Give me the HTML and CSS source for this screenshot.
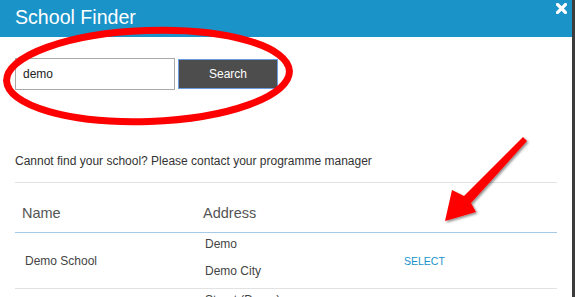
FILE: index.html
```html
<!DOCTYPE html>
<html lang="en">
<head>
    <meta charset="UTF-8">
    <meta name="viewport" content="width=device-width, initial-scale=1.0">
    <title>School Finder</title>
    <link rel="stylesheet" href="styles.css">
</head>
<body>
    <div class="modal">
        <div class="modal-header">
            <div class="modal-title">School Finder</div>
            <button class="close-btn" aria-label="Close">
                <svg width="11" height="11" viewBox="0 0 11 11">
                    <path d="M1.5 1.5 L9.5 9.5 M9.5 1.5 L1.5 9.5" stroke="#fff" stroke-width="3.2" stroke-linecap="square"/>
                </svg>
            </button>
        </div>

        <div class="modal-body">
            <div class="search-row">
                <input class="search-input" type="text" value="demo">
                <button class="btn">Search</button>
            </div>

            <p class="note">Cannot find your school? Please contact your programme manager</p>
            <hr class="divider">

            <table class="results">
                <thead>
                    <tr>
                        <th class="col-name">Name</th>
                        <th class="col-address">Address</th>
                        <th></th>
                    </tr>
                </thead>
                <tbody>
                    <tr>
                        <td class="school-name">Demo School</td>
                        <td class="address">
                            <div class="address-line">Demo</div>
                            <div class="address-line">Demo City</div>
                        </td>
                        <td class="action"><a href="#" class="select-link">SELECT</a></td>
                    </tr>
                    <tr>
                        <td class="school-name"></td>
                        <td class="address">
                            <div class="address-line">Street (Demo)</div>
                        </td>
                        <td></td>
                    </tr>
                </tbody>
            </table>
        </div>

        <!-- annotation marks drawn over the screenshot -->
        <svg class="annotations" width="572" height="297" viewBox="0 0 572 297">
            <defs>
                <filter id="shadow" x="-20%" y="-20%" width="140%" height="140%">
                    <feDropShadow dx="1.5" dy="1.5" stdDeviation="1.2" flood-color="#000" flood-opacity="0.45"/>
                </filter>
            </defs>
            <ellipse cx="148" cy="76" rx="141.5" ry="45.5" fill="none" stroke="#ff0000" stroke-width="7" transform="rotate(-2 148 76)"/>
            <polygon filter="url(#shadow)" fill="#ff0000"
                points="523,137 527,141 471,203 476,212 445,221 452,190 464,196"/>
        </svg>
    </div>
</body>
</html>
```

FILE: styles.css
```css
* {
    margin: 0;
    padding: 0;
    box-sizing: border-box;
    font-family: 'Liberation Sans', Arial, sans-serif;
}

body {
    background-color: #3c3c3c;
    overflow: hidden;
}

.modal {
    position: relative;
    width: 572px;
    height: 297px;
    background-color: #fff;
    overflow: hidden;
}

.modal-header {
    display: flex;
    justify-content: space-between;
    align-items: flex-start;
    height: 37px;
    padding: 0 5px 0 15px;
    background-color: #1a93c9;
}

.modal-title {
    color: #fff;
    font-size: 19.6px;
    line-height: 35px;
}

.close-btn {
    display: flex;
    margin-top: 3px;
    background: none;
    border: none;
    cursor: pointer;
}

.modal-body {
    padding: 21px 15px 0;
}

.search-row {
    display: flex;
    align-items: center;
    gap: 3px;
}

.search-input {
    width: 160px;
    height: 32px;
    padding: 0 7px;
    border: 1px solid #a9a9a9;
    color: #222;
    font-size: 12px;
    outline: none;
}

.btn {
    width: 100px;
    height: 30px;
    background-color: #4d4d4d;
    color: #fff;
    border: 1px solid #6b9be0;
    font-size: 12px;
    cursor: pointer;
}

.note {
    margin-top: 64px;
    color: #333;
    font-size: 12px;
    line-height: 15px;
}

.divider {
    margin-top: 13px;
    border: none;
    border-top: 1px solid #e2e2e2;
}

.results {
    width: 100%;
    table-layout: fixed;
    border-collapse: collapse;
}

.results th {
    padding: 22px 7px 10px;
    color: #555;
    font-size: 14.5px;
    font-weight: normal;
    line-height: 17px;
    text-align: left;
    border-bottom: 1px solid #a6cbe8;
}

.col-name {
    width: 181px;
}

.col-address {
    width: 201px;
}

.results td {
    padding: 2px 7px 8px 9px;
    color: #444;
    font-size: 12px;
    vertical-align: middle;
    border-bottom: 1px solid #e2e2e2;
}

.results td.school-name {
    padding: 10px 7px 10px 10px;
}

.address-line {
    line-height: 18px;
}

.address-line + .address-line {
    margin-top: 9px;
}

.results td.action {
    padding: 10px 7px 10px 7px;
}

.select-link {
    color: #1a93c9;
    font-size: 10.5px;
    text-decoration: none;
}

.annotations {
    position: absolute;
    top: 0;
    left: 0;
    pointer-events: none;
}
```
